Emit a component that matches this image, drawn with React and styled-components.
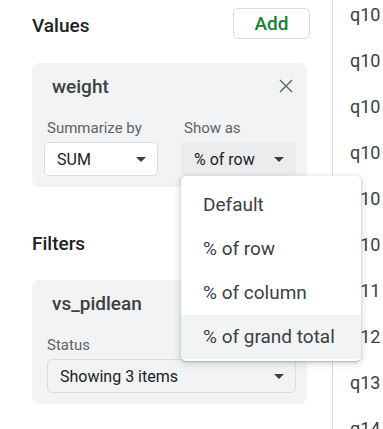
import * as React from "react"
import styled, { createGlobalStyle } from "styled-components"

const GlobalStyle = createGlobalStyle`
  html, body {
    margin: 0;
    padding: 0;
    background: #fff;
    font-family: Roboto, "Liberation Sans", Arial, sans-serif;
    overflow: hidden;
  }
`

const Page = styled.div`
  display: flex;
  width: 383px;
  height: 429px;
  overflow: hidden;
  position: relative;
`

const Sidebar = styled.div`
  flex-shrink: 0;
  width: 275px;
  padding: 8px 25px 0 32px;
  border-right: 1px solid #dadce0;
`

const SectionHead = styled.div`
  display: flex;
  align-items: center;
  justify-content: space-between;
  height: 30px;
  margin-top: ${({ top }) => top || 0}px;
  margin-bottom: ${({ bottom }) => bottom || 0}px;
`

const Heading = styled.h2`
  margin: 0;
  font-size: 19px;
  font-weight: 500;
  color: #202124;
  padding-top: ${({ shift }) => shift || 0}px;
`

const AddButton = styled.button`
  width: 77px;
  height: 31px;
  margin-right: -3px;
  border: 1px solid #dadce0;
  border-radius: 5px;
  background: #fff;
  color: #188038;
  font-family: inherit;
  font-size: 19px;
  font-weight: 500;
  padding: 0;
`

const Card = styled.div`
  background: #f1f3f4;
  border-radius: 8px;
  height: 124px;
  box-sizing: border-box;
  padding: 11px 11px 0 12px;
`

const CardTop = styled.div`
  display: flex;
  align-items: center;
  justify-content: space-between;
  height: 24px;
  padding: 0 2px 0 8px;
`

const CardTitle = styled.div`
  font-size: 19px;
  font-weight: 500;
  color: #3c4043;
`

const Fields = styled.div`
  display: flex;
  gap: 23px;
  margin-top: 22px;
`

const Field = styled.div`
  display: flex;
  flex-direction: column;
  width: ${({ w }) => w}px;
  margin-left: ${({ ml }) => ml || 0}px;
`

const Label = styled.div`
  font-size: 15px;
  color: #5f6368;
  height: 16px;
  line-height: 16px;
  padding-left: ${({ flush }) => (flush ? 0 : 3)}px;
  margin-bottom: 6px;
`

const Select = styled.div`
  display: flex;
  align-items: center;
  justify-content: space-between;
  height: 34px;
  box-sizing: border-box;
  padding: 0 11px 0 12px;
  border-radius: 5px;
  border: 1px solid ${({ flat }) => (flat ? "transparent" : "#dadce0")};
  background: ${({ tone }) => tone || "#fff"};
  font-size: 16px;
  color: #202124;
`

const Caret = styled.span`
  width: 0;
  height: 0;
  border-left: 5px solid transparent;
  border-right: 5px solid transparent;
  border-top: 5px solid #3c4043;
`

const Menu = styled.div`
  position: absolute;
  left: 181px;
  top: 176px;
  width: 180px;
  padding: 7px 0 2px;
  background: #fff;
  border-radius: 5px;
  box-shadow: 0 1px 2px rgba(60, 64, 67, 0.3), 0 2px 6px 2px rgba(60, 64, 67, 0.15);
  z-index: 2;
`

const MenuItem = styled.div`
  height: 44px;
  line-height: 44px;
  padding-left: 22px;
  font-size: 19px;
  color: #3c4043;
  background: ${({ active }) => (active ? "#f1f3f4" : "transparent")};
`

const Grid = styled.div`
  padding-left: 17px;
  margin-top: -8px;
`

const Cell = styled.div`
  height: 46px;
  line-height: 46px;
  font-size: 18px;
  color: #3c4043;
  white-space: nowrap;
`

const CloseIcon = () => (
  <svg width="16" height="16" viewBox="0 0 16 16">
    <path d="M2 2L14 14M14 2L2 14" stroke="#5f6368" strokeWidth="1.4" fill="none" />
  </svg>
)

const cells = ["q10", "q10", "q10", "q10", "q10", "q10", "q11", "q12", "q13", "q14"]
const options = ["Default", "% of row", "% of column", "% of grand total"]

export default function App() {
  return (
    <Page>
      <GlobalStyle />
      <Sidebar>
        <SectionHead bottom={25}>
          <Heading shift={5}>Values</Heading>
          <AddButton>Add</AddButton>
        </SectionHead>
        <Card>
          <CardTop>
            <CardTitle>weight</CardTitle>
            <CloseIcon />
          </CardTop>
          <Fields>
            <Field w={114}>
              <Label>Summarize by</Label>
              <Select>
                SUM
                <Caret />
              </Select>
            </Field>
            <Field w={115}>
              <Label>Show as</Label>
              <Select flat tone="#eaecee">
                % of row
                <Caret />
              </Select>
            </Field>
          </Fields>
        </Card>
        <SectionHead top={41} bottom={22}>
          <Heading>Filters</Heading>
        </SectionHead>
        <Card>
          <CardTop>
            <CardTitle>vs_pidlean</CardTitle>
          </CardTop>
          <Fields>
            <Field w={252} ml={3}>
              <Label flush>Status</Label>
              <Select tone="#f1f3f4">
                Showing 3 items
                <Caret />
              </Select>
            </Field>
          </Fields>
        </Card>
      </Sidebar>
      <Grid>
        {cells.map((c, i) => (
          <Cell key={i}>{c}</Cell>
        ))}
      </Grid>
      <Menu>
        {options.map((o, i) => (
          <MenuItem key={o} active={i === 3}>
            {o}
          </MenuItem>
        ))}
      </Menu>
    </Page>
  )
}
